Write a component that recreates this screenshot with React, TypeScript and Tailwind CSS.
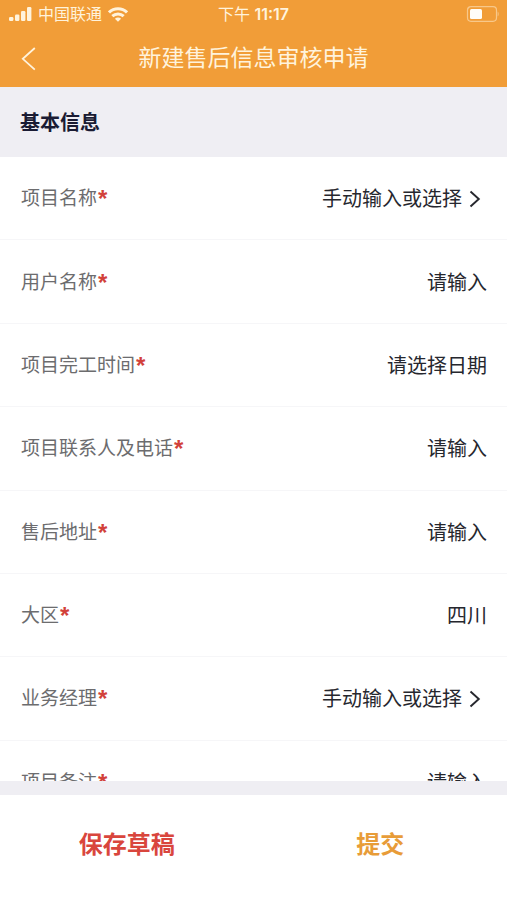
import { useState } from 'react';

type FieldKind = 'picker' | 'text' | 'date';

interface Field {
  id: string;
  label: string;
  kind: FieldKind;
  placeholder: string;
  value?: string;
}

const FIELDS: Field[] = [
  { id: 'project', label: '项目名称', kind: 'picker', placeholder: '手动输入或选择' },
  { id: 'user', label: '用户名称', kind: 'text', placeholder: '请输入' },
  { id: 'finished', label: '项目完工时间', kind: 'date', placeholder: '请选择日期' },
  { id: 'contact', label: '项目联系人及电话', kind: 'text', placeholder: '请输入' },
  { id: 'address', label: '售后地址', kind: 'text', placeholder: '请输入' },
  { id: 'region', label: '大区', kind: 'text', placeholder: '请输入', value: '四川' },
  { id: 'manager', label: '业务经理', kind: 'picker', placeholder: '手动输入或选择' },
  { id: 'remark', label: '项目备注', kind: 'text', placeholder: '请输入' },
];

function StatusBar() {
  return (
    <div className="grid h-7 grid-cols-3 items-center px-2 text-base leading-7 text-[#fff3dc]">
      <div className="flex items-center gap-1.5">
        <svg width="24" height="15" viewBox="0 0 24 15" fill="currentColor" aria-hidden>
          <rect x="1" y="10" width="4.400" height="4" rx="1.200" />
          <rect x="7" y="7.500" width="4.400" height="6.500" rx="1.200" />
          <rect x="13" y="4" width="4.400" height="10" rx="1.200" />
          <rect x="19" y="0" width="4.400" height="14" rx="1.200" />
        </svg>
        <span className="whitespace-nowrap">中国联通</span>
        <svg width="20" height="15" viewBox="0 0 20 15" fill="none" stroke="currentColor" strokeWidth="3" aria-hidden>
          <path d="M1 5.400C6 .4 14 .4 19 5.400" />
          <path d="M4.300 9.200C7.600 6.100 12.400 6.100 15.700 9.200" />
          <path d="M10 14.800 6.900 11.700C8.700 10.100 11.300 10.100 13.100 11.700Z" fill="currentColor" stroke="none" />
        </svg>
      </div>
      <div className="whitespace-nowrap text-center">
        下午 <span className="font-semibold">11:17</span>
      </div>
      <svg className="justify-self-end" width="34" height="16" viewBox="0 0 34 16" fill="none" aria-hidden>
        <rect x="2.500" y=".7" width="29" height="14.600" rx="3.500" stroke="currentColor" strokeOpacity=".5" strokeWidth="1.200" />
        <rect x="5" y="3" width="12" height="10" rx="1.500" fill="#fffdf8" />
        <path d="M32.700 5.500c1.300.8 1.300 4.200 0 5Z" fill="currentColor" fillOpacity=".5" />
      </svg>
    </div>
  );
}

function FieldRow({ field }: { field: Field }) {
  const [value, setValue] = useState(field.value ?? '');

  return (
    <div className="flex items-center justify-between gap-4 border-b border-[#f6f6f8] pt-0.5 pr-5 pl-[21px]">
      <label htmlFor={field.id} className="flex shrink-0 items-center gap-px text-[19px] leading-7 text-[#6c6c6e]">
        {field.label}
        <span className="font-['Liberation_Sans'] text-2xl leading-6 font-bold text-[#d2413a]">*</span>
      </label>
      {field.kind === 'text' && (
        <input
          id={field.id}
          value={value}
          onChange={e => setValue(e.target.value)}
          placeholder={field.placeholder}
          className="min-w-0 flex-1 bg-transparent text-right text-xl text-[#26272e] outline-none placeholder:text-[#26272e]"
        />
      )}
      {field.kind === 'date' && (
        <button id={field.id} type="button" className="text-xl text-[#26272e]">
          {field.placeholder}
        </button>
      )}
      {field.kind === 'picker' && (
        <button id={field.id} type="button" className="flex items-center gap-1.5 pr-1.5 text-xl text-[#26272e]">
          {field.placeholder}
          <svg width="13" height="18" viewBox="0 0 13 18" fill="none" stroke="currentColor" strokeWidth="1.900" aria-hidden>
            <path d="M2.500 1.500 10.800 9 2.500 16.500" />
          </svg>
        </button>
      )}
    </div>
  );
}

export default function App() {
  return (
    <div className="flex h-screen flex-col bg-white font-['Inter','Noto_Sans_CJK_SC',sans-serif]">
      <header className="bg-[#f19d38]">
        <StatusBar />
        <div className="grid h-[59px] grid-cols-[1fr_auto_1fr] items-center px-5 pt-0.5 text-[#fff3dc]">
          <button type="button" aria-label="返回" className="justify-self-start">
            <svg width="17" height="24" viewBox="0 0 17 24" fill="none" stroke="currentColor" strokeWidth="1.800">
              <path d="M14.800 1 2.800 11.800 14.800 22.600" />
            </svg>
          </button>
          <h1 className="text-[23px]">新建售后信息审核申请</h1>
        </div>
      </header>

      <h2 className="bg-[#efeef3] px-5 pt-[22px] pb-5 text-xl font-bold text-[#1a1b33]">基本信息</h2>

      <main className="min-h-0 flex-1 overflow-y-auto [scrollbar-width:none]">
        <form className="grid min-h-[667px] auto-rows-fr">
          {FIELDS.map(field => (
            <FieldRow key={field.id} field={field} />
          ))}
        </form>
      </main>

      <footer className="grid grid-cols-2 border-t-14 border-[#efeef3] pt-8 pb-[37px] text-2xl font-bold">
        <button type="button" className="leading-9 text-[#d9463d]">保存草稿</button>
        <button type="button" className="leading-9 text-[#e89c38]">提交</button>
      </footer>
    </div>
  );
}
